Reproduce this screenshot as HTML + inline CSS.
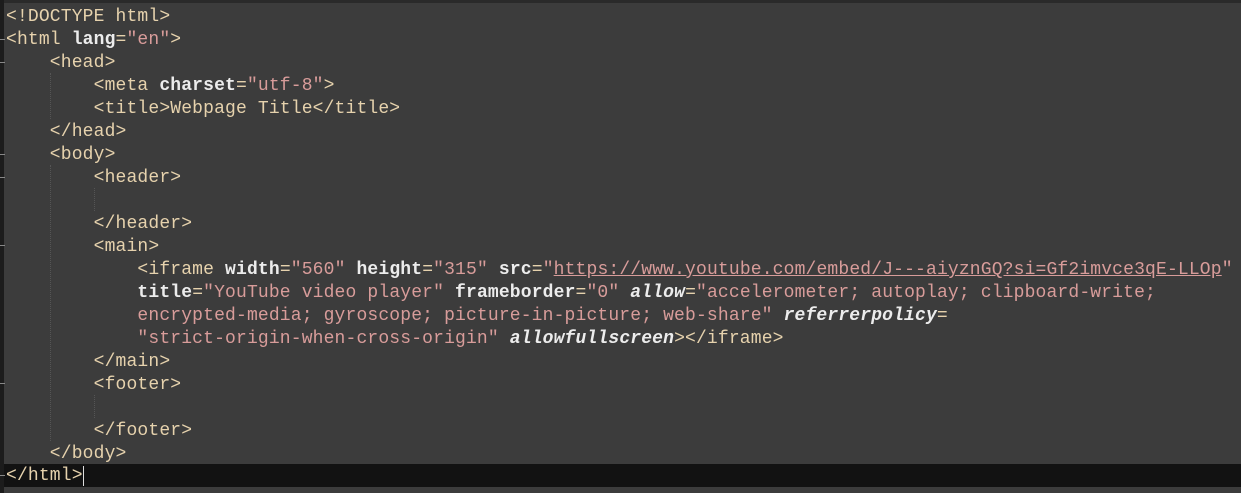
<!DOCTYPE html>
<html><head><meta charset="utf-8"><style>
html,body{margin:0;padding:0;}
body{width:1241px;height:493px;background:#3c3c3c;position:relative;overflow:hidden;font-family:"Liberation Mono",monospace;font-size:18px;}
.gut{position:absolute;left:0;top:0;width:4px;height:493px;background:#1c1c1c;}
.top{position:absolute;left:0;top:0;width:1241px;height:3px;background:#2a2a2a;}
.l{position:absolute;left:6px;height:23px;line-height:23px;white-space:pre;color:#e6d2ad;letter-spacing:0.15px;}
.a{color:#ececec;font-weight:bold;}
.i{color:#ececec;font-style:italic;font-weight:bold;}
.v{color:#d89c9a;}
.u{text-decoration:underline;}
.cur{position:absolute;left:0;top:464px;width:1241px;height:23px;background:#121212;}
.guide{position:absolute;width:0;border-left:1px dotted #555;}
.mk{position:absolute;left:0;width:5px;height:1px;background:#888;}
</style></head><body>
<div class="top"></div>
<div class="cur"></div>
<div class="gut"></div>
<div class="guide" style="left:50px;top:73px;height:46px"></div>
<div class="guide" style="left:50px;top:165px;height:276px"></div>
<div class="guide" style="left:94px;top:188px;height:23px"></div>
<div class="guide" style="left:94px;top:395px;height:23px"></div>
<div class="mk" style="top:39px"></div><div class="mk" style="top:62px"></div><div class="mk" style="top:154px"></div><div class="mk" style="top:177px"></div><div class="mk" style="top:245px"></div><div class="mk" style="top:383px"></div><div class="mk" style="top:475px"></div>
<div class="l" style="top:6px">&lt;!DOCTYPE html&gt;</div>
<div class="l" style="top:29px">&lt;html <span class="a">lang</span>=<span class="v">"en"</span>&gt;</div>
<div class="l" style="top:52px">    &lt;head&gt;</div>
<div class="l" style="top:75px">        &lt;meta <span class="a">charset</span>=<span class="v">"utf-8"</span>&gt;</div>
<div class="l" style="top:98px">        &lt;title&gt;Webpage Title&lt;/title&gt;</div>
<div class="l" style="top:121px">    &lt;/head&gt;</div>
<div class="l" style="top:144px">    &lt;body&gt;</div>
<div class="l" style="top:167px">        &lt;header&gt;</div>
<div class="l" style="top:213px">        &lt;/header&gt;</div>
<div class="l" style="top:236px">        &lt;main&gt;</div>
<div class="l" style="top:259px">            &lt;iframe <span class="a">width</span>=<span class="v">"560"</span> <span class="a">height</span>=<span class="v">"315"</span> <span class="a">src</span>=<span class="v">"<span class="u">https://www.youtube.com/embed/J---aiyznGQ?si=Gf2imvce3qE-LLOp</span>"</span></div>
<div class="l" style="top:282px">            <span class="a">title</span>=<span class="v">"YouTube video player"</span> <span class="a">frameborder</span>=<span class="v">"0"</span> <span class="i">allow</span>=<span class="v">"accelerometer; autoplay; clipboard-write;</span></div>
<div class="l" style="top:305px"><span class="v">            encrypted-media; gyroscope; picture-in-picture; web-share"</span> <span class="i">referrerpolicy</span>=</div>
<div class="l" style="top:328px">            <span class="v">"strict-origin-when-cross-origin"</span> <span class="i">allowfullscreen</span>&gt;&lt;/iframe&gt;</div>
<div class="l" style="top:351px">        &lt;/main&gt;</div>
<div class="l" style="top:374px">        &lt;footer&gt;</div>
<div class="l" style="top:420px">        &lt;/footer&gt;</div>
<div class="l" style="top:443px">    &lt;/body&gt;</div>
<div class="l" style="top:465px">&lt;/html&gt;<span style="border-left:1px solid #ddd;"></span></div>
</body></html>
